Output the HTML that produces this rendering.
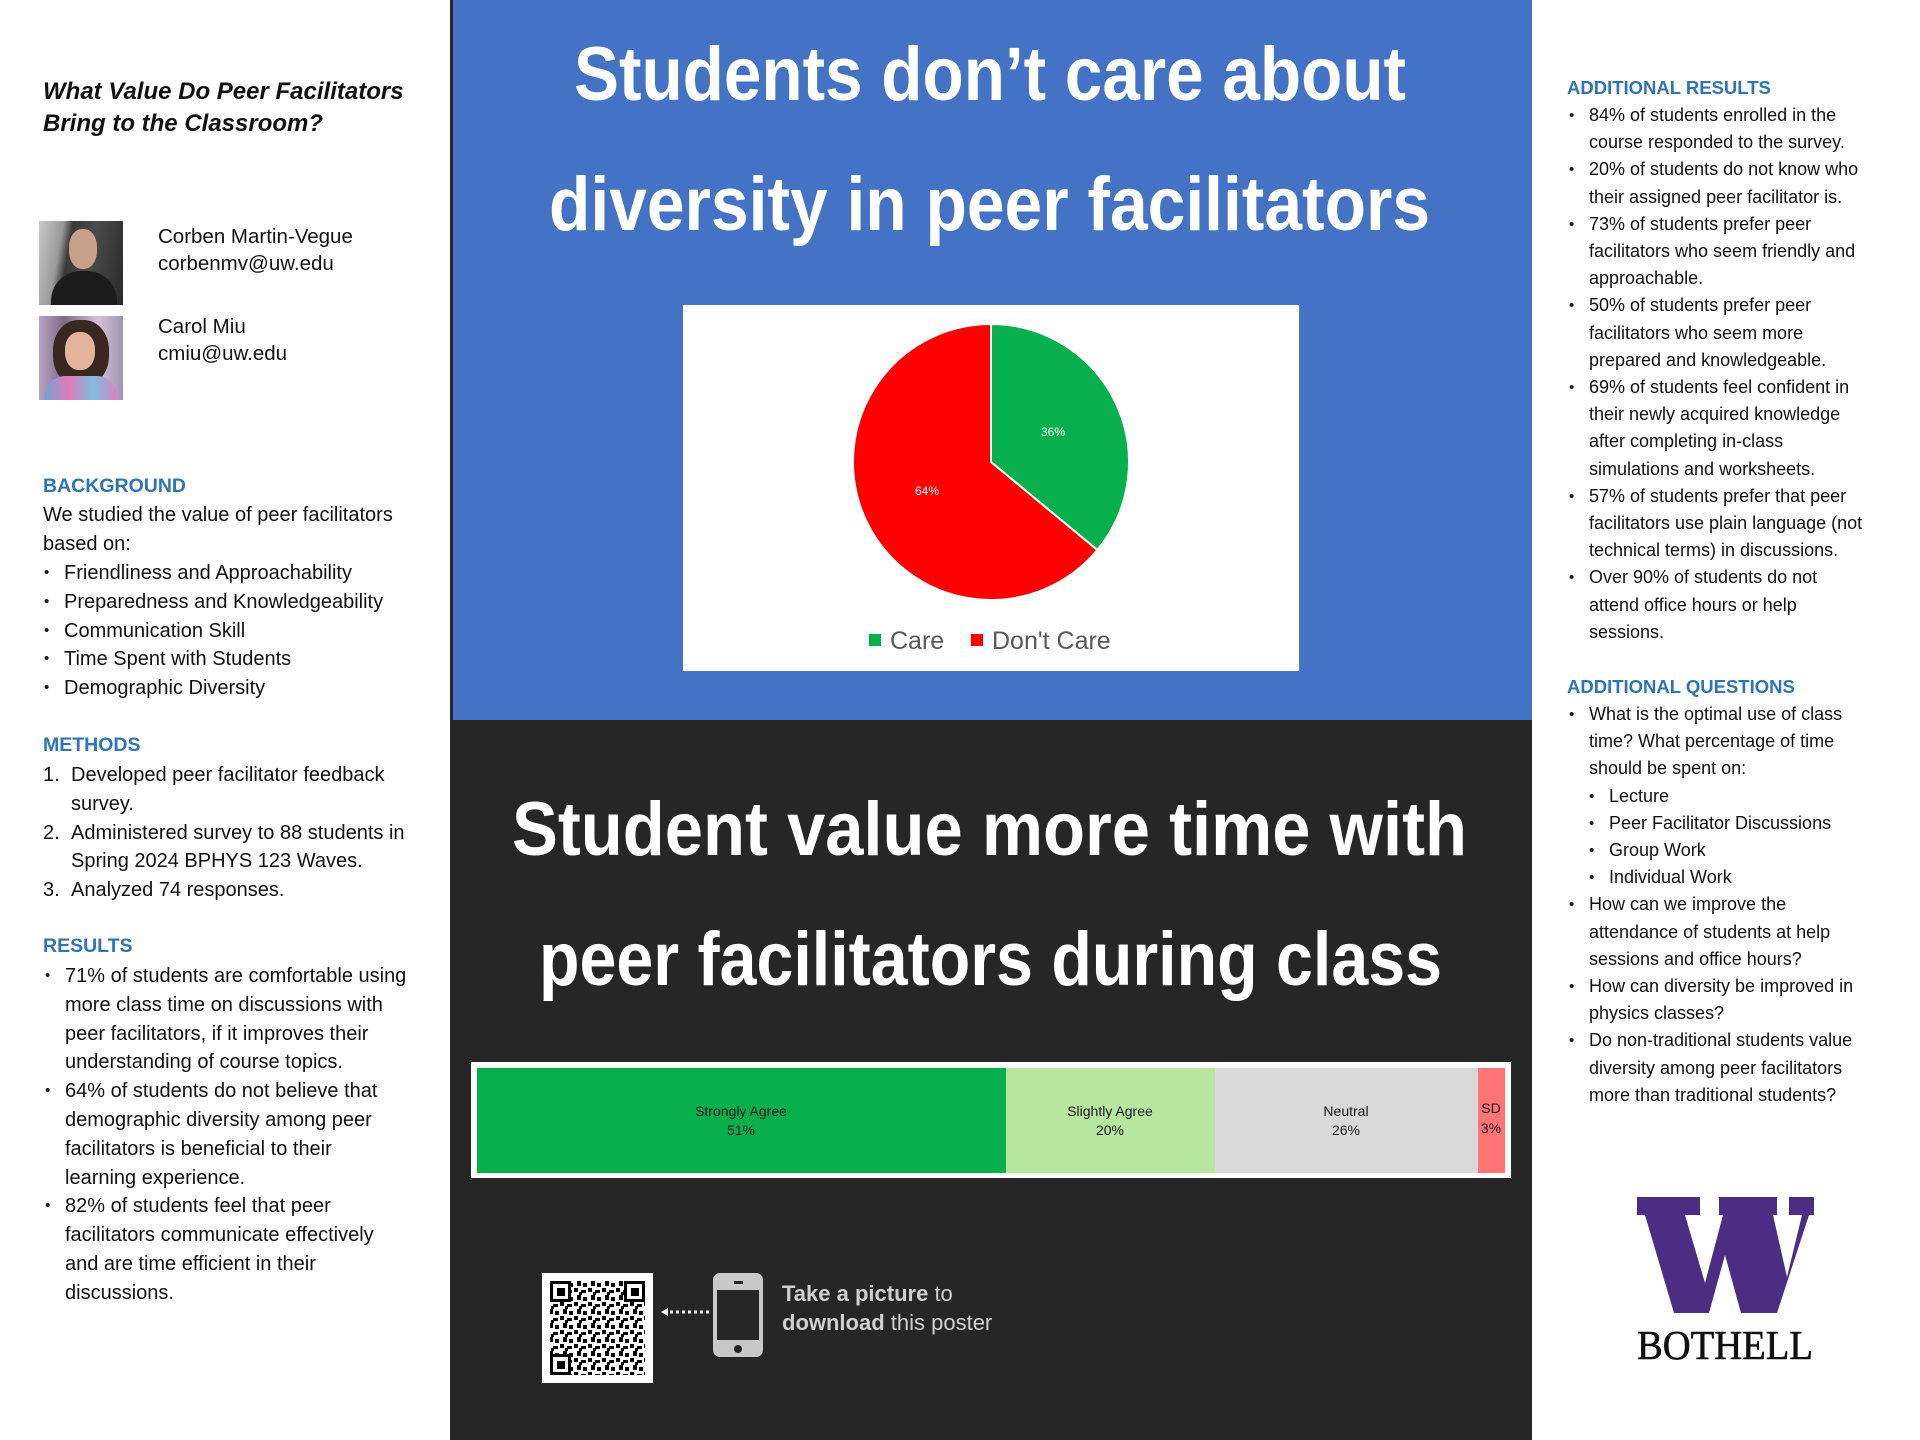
<!DOCTYPE html>
<html><head><meta charset="utf-8">
<style>
*{margin:0;padding:0;box-sizing:border-box}
body{width:1920px;height:1440px;position:relative;overflow:hidden;background:#fff;font-family:"Liberation Sans",sans-serif;color:#111}
.abs{position:absolute;white-space:nowrap}
.h{color:#2f74b8;font-weight:bold;font-size:19.5px}
.t{font-size:20px;line-height:28.8px}
.r{font-size:18px;line-height:27.2px}
.li{position:relative}
.li::before{content:"•";position:absolute;left:-20px;font-size:15px}
</style></head><body>

<div class="abs" style="left:43px;top:76px;font-size:24px;font-weight:bold;font-style:italic;line-height:32px">What Value Do Peer Facilitators<br>Bring to the Classroom?</div>

<div class="abs" style="left:39px;top:221px;width:84px;height:84px;background:linear-gradient(100deg,#c8c8c8 0%,#9a9a9a 25%,#3a3a3a 35%,#4a4a4a 60%,#2a2a2a 100%)">
  <div style="position:absolute;left:30px;top:8px;width:28px;height:40px;border-radius:45%;background:#c9a08a"></div>
  <div style="position:absolute;left:12px;top:50px;width:66px;height:34px;border-radius:30px 30px 0 0;background:#1c1c1c"></div>
</div>
<div class="abs" style="left:39px;top:316px;width:84px;height:84px;background:linear-gradient(90deg,#b8a4c4,#7a6a88 30%,#d6c2d8 70%,#a093b0)">
  <div style="position:absolute;left:14px;top:4px;width:56px;height:66px;border-radius:45%;background:#3a2820"></div>
  <div style="position:absolute;left:26px;top:16px;width:30px;height:38px;border-radius:45%;background:#e2b49c"></div>
  <div style="position:absolute;left:6px;top:60px;width:72px;height:24px;border-radius:20px 20px 0 0;background:linear-gradient(90deg,#6fa4d8,#e07ab8,#7cc0e0,#d884c0)"></div>
</div>
<div class="abs" style="left:158px;top:223px;font-size:20.5px;line-height:27px">Corben Martin-Vegue<br>corbenmv@uw.edu</div>
<div class="abs" style="left:158px;top:313px;font-size:20.5px;line-height:27px">Carol Miu<br>cmiu@uw.edu</div>

<div class="abs h" style="left:43px;top:475px">BACKGROUND</div>
<div class="abs t" style="left:43px;top:501px">We studied the value of peer facilitators<br>based on:</div>
<div class="abs t" style="left:64px;top:559px">
<div class="li">Friendliness and Approachability</div>
<div class="li">Preparedness and Knowledgeability</div>
<div class="li">Communication Skill</div>
<div class="li">Time Spent with Students</div>
<div class="li">Demographic Diversity</div>
</div>

<div class="abs h" style="left:43px;top:734px">METHODS</div>
<div class="abs t" style="left:43px;top:761px">1.<br><br>2.<br><br>3.</div>
<div class="abs t" style="left:71px;top:761px">Developed peer facilitator feedback<br>survey.<br>Administered survey to 88 students in<br>Spring 2024 BPHYS 123 Waves.<br>Analyzed 74 responses.</div>

<div class="abs h" style="left:43px;top:935px">RESULTS</div>
<div class="abs t" style="left:65px;top:962px">
<div class="li">71% of students are comfortable using<br>more class time on discussions with<br>peer facilitators, if it improves their<br>understanding of course topics.</div>
<div class="li">64% of students do not believe that<br>demographic diversity among peer<br>facilitators is beneficial to their<br>learning experience.</div>
<div class="li">82% of students feel that peer<br>facilitators communicate effectively<br>and are time efficient in their<br>discussions.</div>
</div>

<div class="abs" style="left:450px;top:0;width:3px;height:1440px;background:#262626"></div>
<div class="abs" style="left:453px;top:0;width:1079px;height:720px;background:#4472c4"></div>
<div class="abs" style="left:450px;top:720px;width:1082px;height:720px;background:#262626"></div>

<svg class="abs" style="left:0;top:0" width="1920" height="1440">
  <g font-family="Liberation Sans, sans-serif" font-weight="bold" fill="#fff" font-size="76">
    <text x="574" y="100" textLength="832" lengthAdjust="spacingAndGlyphs">Students don’t care about</text>
    <text x="549" y="230" textLength="881" lengthAdjust="spacingAndGlyphs">diversity in peer facilitators</text>
    <text x="512" y="855" textLength="955" lengthAdjust="spacingAndGlyphs">Student value more time with</text>
    <text x="539" y="985" textLength="903" lengthAdjust="spacingAndGlyphs">peer facilitators during class</text>
  </g>
  <rect x="683" y="305" width="616" height="366" fill="#fff"/>
  <path d="M991 462 L991 324 A138 138 0 0 1 1097.3 550 Z" fill="#07b04c" stroke="#fff" stroke-width="2"/>
  <path d="M991 462 L1097.3 550 A138 138 0 1 1 991 324 Z" fill="#fe0000" stroke="#fff" stroke-width="2"/>
  <text x="1053" y="436" fill="#fff" font-size="12" font-family="Liberation Sans, sans-serif" text-anchor="middle">36%</text>
  <text x="927" y="495" fill="#fff" font-size="12" font-family="Liberation Sans, sans-serif" text-anchor="middle">64%</text>
  <rect x="869" y="634" width="12" height="12" fill="#07b04c"/>
  <text x="890" y="649" fill="#595959" font-size="25" font-family="Liberation Sans, sans-serif">Care</text>
  <rect x="971" y="634" width="12" height="12" fill="#fe0000"/>
  <text x="992" y="649" fill="#595959" font-size="25" font-family="Liberation Sans, sans-serif">Don't Care</text>
  <rect x="471" y="1062" width="1040" height="116" fill="#fff"/>
  <rect x="477" y="1068" width="529" height="105" fill="#07b04c"/>
  <rect x="1006" y="1068" width="209" height="105" fill="#b6e6a0"/>
  <rect x="1215" y="1068" width="263" height="105" fill="#d9d9d9"/>
  <rect x="1478" y="1068" width="27" height="105" fill="#ff7474"/>
  <g font-family="Liberation Sans Narrow, Liberation Sans, sans-serif" font-size="14" fill="#1a1a1a" text-anchor="middle">
    <text x="741" y="1116">Strongly Agree</text><text x="741" y="1135">51%</text>
    <text x="1110" y="1116">Slightly Agree</text><text x="1110" y="1135">20%</text>
    <text x="1346" y="1116">Neutral</text><text x="1346" y="1135">26%</text>
    <text x="1491" y="1113">SD</text><text x="1491" y="1133">3%</text>
  </g>
  <rect x="542" y="1273" width="111" height="110" fill="#fff"/>
  <defs>
    <pattern id="qr" width="14" height="14" patternUnits="userSpaceOnUse">
      <rect width="14" height="14" fill="#fff"/>
      <rect x="0" y="0" width="4" height="4" fill="#000"/><rect x="7" y="2" width="5" height="3" fill="#000"/>
      <rect x="3" y="7" width="4" height="5" fill="#000"/><rect x="9" y="9" width="4" height="4" fill="#000"/>
      <rect x="5" y="4" width="3" height="3" fill="#000"/>
    </pattern>
  </defs>
  <rect x="550" y="1281" width="95" height="94" fill="url(#qr)"/>
  <g fill="none" stroke="#000" stroke-width="3">
    <rect x="551.5" y="1282.5" width="18" height="18" fill="#fff"/><rect x="625.5" y="1282.5" width="18" height="18" fill="#fff"/><rect x="551.5" y="1355.5" width="18" height="18" fill="#fff"/>
  </g>
  <rect x="557" y="1288" width="8" height="8"/><rect x="631" y="1288" width="8" height="8"/><rect x="557" y="1361" width="8" height="8"/>
  <path d="M661 1312 L668 1308 L668 1316 Z" fill="#fff"/>
  <line x1="670" y1="1312" x2="710" y2="1312" stroke="#fff" stroke-width="3" stroke-dasharray="3 3"/>
  <rect x="713" y="1273" width="50" height="84" rx="7" fill="#c8c8c8"/>
  <rect x="717" y="1290" width="42" height="50" fill="#262626"/>
  <rect x="734" y="1281" width="9" height="3" fill="#262626"/>
  <circle cx="738" cy="1349" r="4" fill="#262626"/>
  <g font-family="Liberation Sans, sans-serif" font-size="22" fill="#d0d0d0">
    <text x="782" y="1301"><tspan font-weight="bold">Take a picture</tspan> to</text>
    <text x="782" y="1330"><tspan font-weight="bold">download</tspan> this poster</text>
  </g>
  <polygon transform="translate(1637,1197)" fill="#4b2e83" points="0,0 63,0 63,18 48,18 68,86 86,18 82,18 82,0 140,0 140,18 136,18 150,80 165,18 152,18 152,0 177,0 177,18 172,18 140,116 104,116 88,58 72,116 37,116 8,18 0,18"/>
  <text x="1725" y="1359" text-anchor="middle" font-family="Liberation Serif, serif" font-size="41" fill="#111" stroke="#111" stroke-width="0.6" textLength="176" lengthAdjust="spacingAndGlyphs">BOTHELL</text>
</svg>

<div class="abs h" style="left:1567px;top:77px;font-size:18.5px">ADDITIONAL RESULTS</div>
<div class="abs r" style="left:1589px;top:102px">
<div class="li">84% of students enrolled in the<br>course responded to the survey.</div>
<div class="li">20% of students do not know who<br>their assigned peer facilitator is.</div>
<div class="li">73% of students prefer peer<br>facilitators who seem friendly and<br>approachable.</div>
<div class="li">50% of students prefer peer<br>facilitators who seem more<br>prepared and knowledgeable.</div>
<div class="li">69% of students feel confident in<br>their newly acquired knowledge<br>after completing in-class<br>simulations and worksheets.</div>
<div class="li">57% of students prefer that peer<br>facilitators use plain language (not<br>technical terms) in discussions.</div>
<div class="li">Over 90% of students do not<br>attend office hours or help<br>sessions.</div>
</div>
<div class="abs h" style="left:1567px;top:676px;font-size:18.5px">ADDITIONAL QUESTIONS</div>
<div class="abs r" style="left:1589px;top:701px">
<div class="li">What is the optimal use of class<br>time? What percentage of time<br>should be spent on:</div>
<div class="li" style="left:20px">Lecture</div>
<div class="li" style="left:20px">Peer Facilitator Discussions</div>
<div class="li" style="left:20px">Group Work</div>
<div class="li" style="left:20px">Individual Work</div>
<div class="li">How can we improve the<br>attendance of students at help<br>sessions and office hours?</div>
<div class="li">How can diversity be improved in<br>physics classes?</div>
<div class="li">Do non-traditional students value<br>diversity among peer facilitators<br>more than traditional students?</div>
</div>
</body></html>
